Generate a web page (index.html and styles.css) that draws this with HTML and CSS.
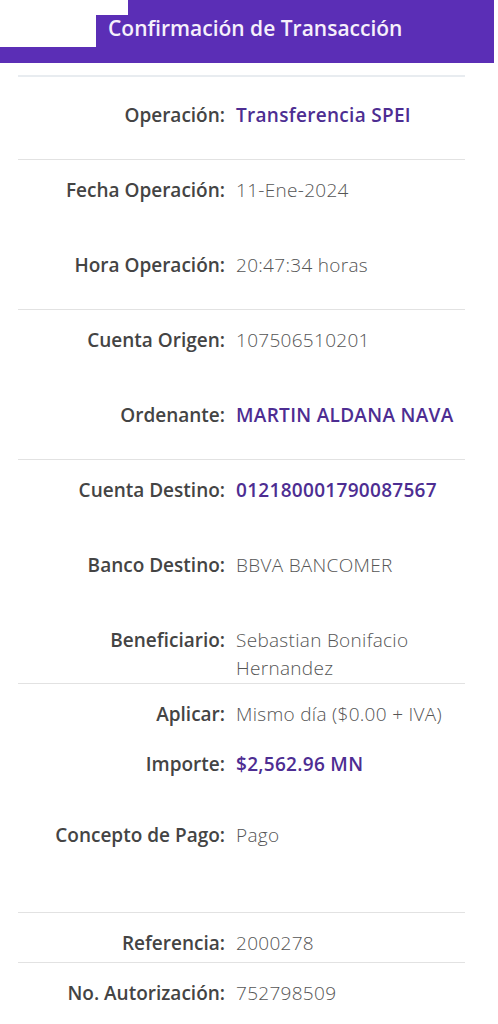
FILE: index.html
```html
<!DOCTYPE html>
<html lang="es">
<head>
    <meta charset="UTF-8">
    <meta name="viewport" content="width=device-width, initial-scale=1.0">
    <title>Confirmación de Transacción</title>
    <link rel="stylesheet" href="styles.css">
</head>
<body>
    <header class="topbar">
        <h1>Confirmación de Transacción</h1>
        <!-- recuadros blancos sobre la barra -->
        <div class="mask mask-a"></div>
        <div class="mask mask-b"></div>
    </header>

    <main class="detalle">
        <section class="grupo grupo-inicio">
            <div class="fila">
                <span class="etiqueta">Operación:</span>
                <span class="valor destacado">Transferencia SPEI</span>
            </div>
        </section>

        <section class="grupo">
            <div class="fila">
                <span class="etiqueta">Fecha Operación:</span>
                <span class="valor">11-Ene-2024</span>
            </div>
            <div class="fila">
                <span class="etiqueta">Hora Operación:</span>
                <span class="valor">20:47:34 horas</span>
            </div>
        </section>

        <section class="grupo">
            <div class="fila">
                <span class="etiqueta">Cuenta Origen:</span>
                <span class="valor">107506510201</span>
            </div>
            <div class="fila">
                <span class="etiqueta">Ordenante:</span>
                <span class="valor destacado">MARTIN ALDANA NAVA</span>
            </div>
        </section>

        <section class="grupo">
            <div class="fila">
                <span class="etiqueta">Cuenta Destino:</span>
                <span class="valor destacado">012180001790087567</span>
            </div>
            <div class="fila">
                <span class="etiqueta">Banco Destino:</span>
                <span class="valor">BBVA BANCOMER</span>
            </div>
            <div class="fila fila-final">
                <span class="etiqueta">Beneficiario:</span>
                <span class="valor">Sebastian Bonifacio Hernandez</span>
            </div>
        </section>

        <section class="grupo">
            <div class="fila fila-aplicar">
                <span class="etiqueta">Aplicar:</span>
                <span class="valor">Mismo día ($0.00 + IVA)</span>
            </div>
            <div class="fila fila-importe">
                <span class="etiqueta">Importe:</span>
                <span class="valor destacado">$2,562.96 MN</span>
            </div>
            <div class="fila fila-concepto">
                <span class="etiqueta">Concepto de Pago:</span>
                <span class="valor">Pago</span>
            </div>
        </section>

        <section class="grupo">
            <div class="fila fila-corta">
                <span class="etiqueta">Referencia:</span>
                <span class="valor">2000278</span>
            </div>
        </section>

        <section class="grupo">
            <div class="fila">
                <span class="etiqueta">No. Autorización:</span>
                <span class="valor">752798509</span>
            </div>
        </section>
    </main>
</body>
</html>
```

FILE: styles.css
```css
body {
    margin: 0;
    padding: 0;
    background-color: #fff;
    font-family: "Open Sans", "Noto Sans", sans-serif;
}
.topbar {
    position: relative;
    width: 494px;
    height: 63px;
    background-color: #5b2eb6;
    box-sizing: border-box;
    padding-left: 108px;
}
.topbar h1 {
    margin: 0;
    line-height: 56px;
    font-size: 21px;
    font-weight: 600;
    color: #f6f0fb;
}
.mask {
    position: absolute;
    left: 0;
    background-color: #fff;
}
.mask-a {
    top: 0;
    width: 128px;
    height: 15px;
}
.mask-b {
    top: 15px;
    width: 96px;
    height: 32px;
}
.detalle {
    margin: 12px 33px 0 18px;
}
.grupo {
    border-top: 1px solid #e2e2e2;
}
.grupo + .grupo {
    margin-top: -1px;
}
.grupo-inicio {
    border-top: 2px solid #e8ecf0;
    padding-top: 8px;
}
.fila {
    display: flex;
    padding: 16px 0 31px;
    font-size: 19px;
    line-height: 28px;
}
.fila-final {
    padding-bottom: 2px;
}
.fila-aplicar {
    padding-bottom: 6px;
}
.fila-importe {
    padding-bottom: 27px;
}
.fila-concepto {
    padding-bottom: 64px;
}
.fila-corta {
    padding-bottom: 6px;
}
.etiqueta {
    flex-shrink: 0;
    width: 207px;
    text-align: right;
    font-weight: 600;
    color: #444;
}
.valor {
    margin-left: 11px;
    font-weight: 300;
    color: #555;
    letter-spacing: 0.3px;
}
.valor.destacado {
    font-weight: 600;
    color: #4d2d92;
    letter-spacing: 0.3px;
}
```
